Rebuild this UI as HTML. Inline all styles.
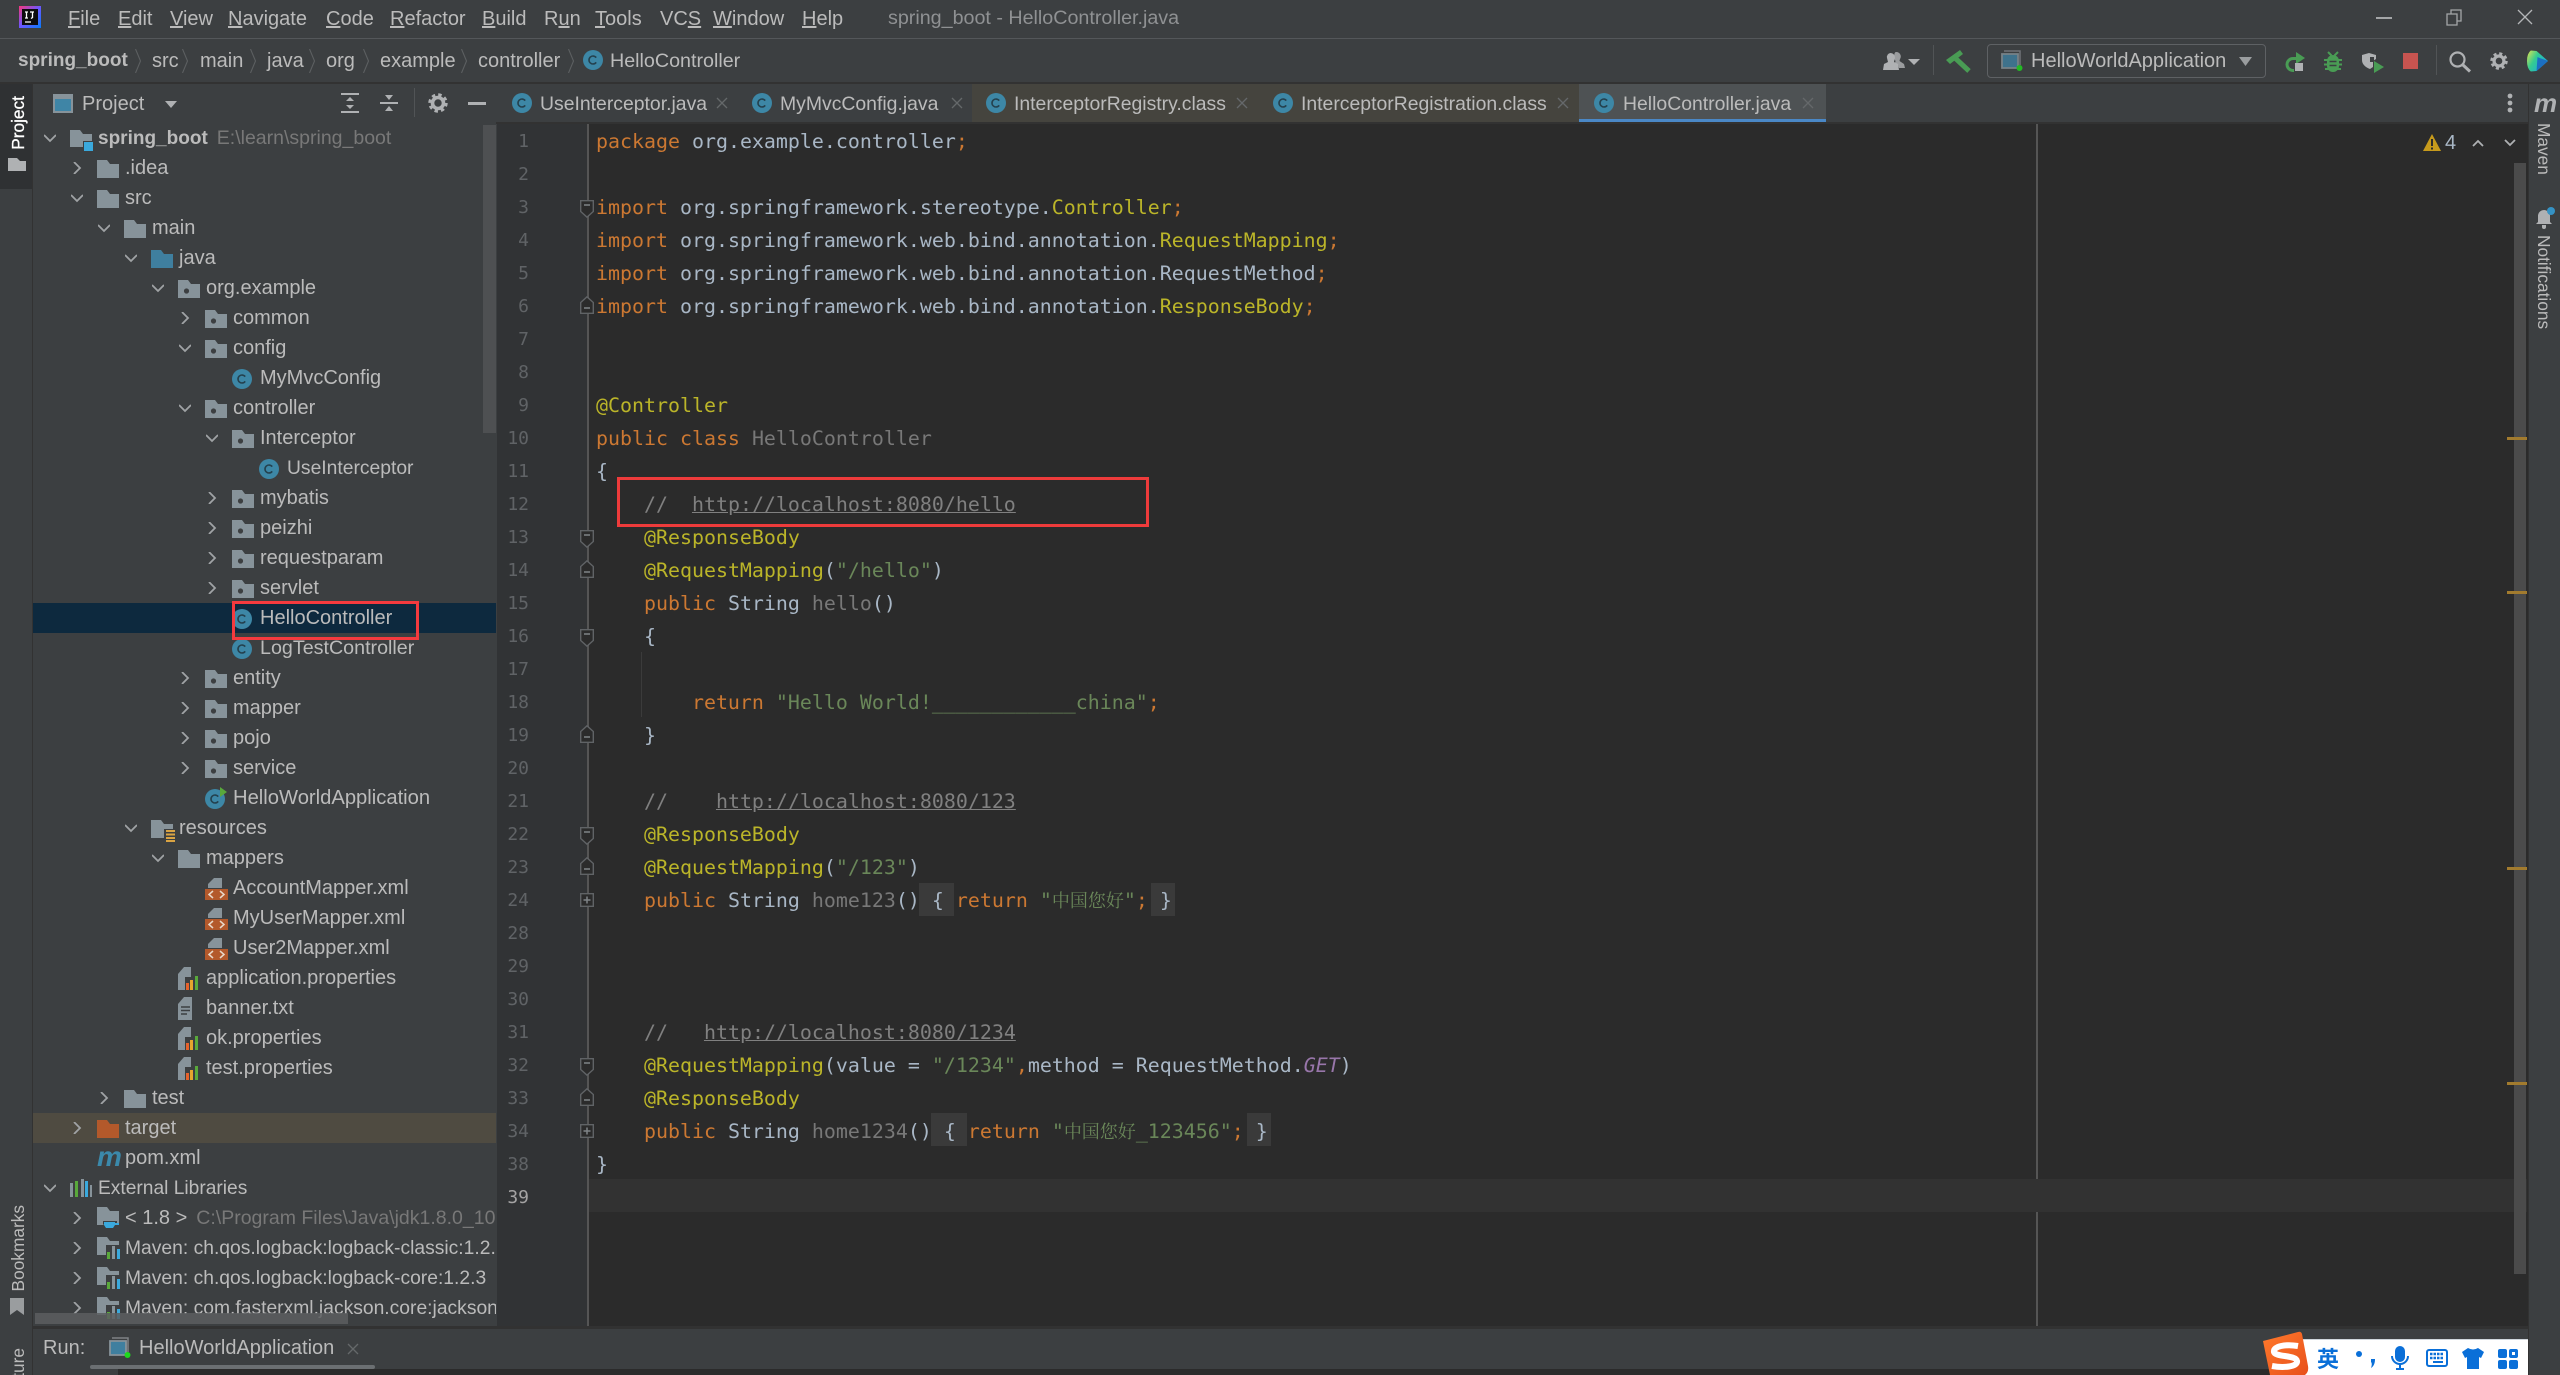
<!DOCTYPE html>
<html lang="en"><head><meta charset="utf-8"><title>spring_boot - HelloController.java</title>
<style>
html{margin:0;padding:0;width:2560px;height:1375px;overflow:hidden;background:#3c3f41}
body{margin:0;padding:0;width:2560px;height:1375px;position:relative;overflow:hidden;background:#3c3f41;font:20px "Liberation Sans","Noto Sans CJK SC",sans-serif;color:#bbb}
#root{position:absolute;left:0;top:0;width:2560px;height:1375px;overflow:hidden}
.t{position:absolute;white-space:nowrap}
.b{position:absolute}
svg{position:absolute;overflow:visible}
.m{top:1px;line-height:36px}
.n{top:41px;line-height:40px}
.tb{top:84px;line-height:40px;font-size:19.400px}
.v{position:absolute;writing-mode:vertical-rl;white-space:nowrap;font-size:17.300px;line-height:20px}
.up{transform:rotate(180deg)}
#tree{position:absolute;left:33px;top:123px;width:463px;height:1203px;overflow:hidden}
.r{position:relative;height:30px;line-height:31px;white-space:nowrap;padding-left:calc(65px + 27px*var(--l))}
.r>svg{left:calc(37px + 27px*var(--l));top:6px}
.r>svg.a{left:calc(11px + 27px*var(--l));top:9px;width:12px;height:12px}
.r>svg.e{top:7px}
.g{color:#787878}
.q{font-size:19.300px}
#code{position:absolute;left:596px;top:125px;font:19.93px "DejaVu Sans Mono","Liberation Mono","Noto Sans CJK SC",monospace;color:#a9b7c6}
#code div{height:33px;line-height:33px;white-space:pre}
#nums{position:absolute;left:497px;width:32px;top:125px;font:18px "DejaVu Sans Mono","Liberation Mono",monospace;color:#606366;text-align:right}
#nums div{height:33px;line-height:33px}
.k{color:#cc7832}.y{color:#bbb529}.s{color:#6a8759}.c{color:#808080}.u{color:#808080;text-decoration:underline}.w{color:#787878}.p{color:#9876aa;font-style:italic}
.z{font:18px "Noto Serif CJK SC","Noto Sans CJK SC",serif}
</style></head><body><div id="root">
<svg width="0" height="0" style="position:absolute"><defs>
<symbol id="c" viewBox="0 0 20 20"><circle cx="10" cy="10" r="10" fill="#3d87a6"/><path d="M13.2 7.6A4 4 0 1 0 13.2 12.4" fill="none" stroke="#24414e" stroke-width="1.6"/></symbol>
<symbol id="ca" viewBox="0 0 22 22"><circle cx="10" cy="12" r="10" fill="#3d87a6"/><path d="M13.2 9.6A4 4 0 1 0 13.2 14.4" fill="none" stroke="#24414e" stroke-width="1.6"/><path d="M15 0l7 5-7 5z" fill="#59a83b"/></symbol>
<symbol id="ar" viewBox="0 0 12 12"><path d="M3 0l6 6-6 6" fill="none" stroke="#a0a3a5" stroke-width="1.8"/></symbol>
<symbol id="ad" viewBox="0 0 12 12"><path d="M0 3l6 6 6-6" fill="none" stroke="#a0a3a5" stroke-width="1.8"/></symbol>
<symbol id="fo" viewBox="0 0 22 18"><path d="M0 0h10l3 4h9v14H0z" fill="#87939a"/></symbol>
<symbol id="fb" viewBox="0 0 22 18"><path d="M0 0h10l3 4h9v14H0z" fill="#3f7f9f"/></symbol>
<symbol id="fp" viewBox="0 0 22 18"><path d="M0 0h10l3 4h9v14H0z" fill="#87939a"/><circle cx="8.5" cy="11" r="2.6" fill="#3c3f41"/></symbol>
<symbol id="fm" viewBox="0 0 24 22"><path d="M0 0h10l3 4h9v13H0z" fill="#87939a"/><path d="M13 11h11v11H13z" fill="#3c3f41"/><path d="M14 12h9v9h-9z" fill="#3aa9dd"/></symbol>
<symbol id="fr" viewBox="0 0 24 22"><path d="M0 0h10l3 4h9v14H0z" fill="#87939a"/><path d="M13 9h11v13H13z" fill="#3c3f41"/><path d="M15 10h9v2h-9zm0 3.500h9v2h-9zm0 3.500h9v2h-9zm0 3h9v2h-9z" fill="#d9a343"/></symbol>
<symbol id="ft" viewBox="0 0 22 18"><path d="M0 0h10l3 4h9v14H0z" fill="#b3592b"/></symbol>
<symbol id="xm" viewBox="0 0 23 23"><path d="M3 11V7l6-6h8v10z" fill="#87939a"/><path d="M0 12h23v11H0z" fill="#b3592b"/><path d="M8 14l-4 3.500 4 3.500M15 14l4 3.500-4 3.500" fill="none" stroke="#e8d8c8" stroke-width="1.5"/></symbol>
<symbol id="pr" viewBox="0 0 20 23"><path d="M0 7l6-7h7v23H0z" fill="#87939a"/><path d="M7 10h13v13H7z" fill="#3c3f41"/><path d="M8 16h3v7H8z" fill="#e6612a"/><path d="M12 13h3v10h-3z" fill="#e6a52e"/><path d="M17 9h3v14h-3z" fill="#59a83b"/></symbol>
<symbol id="tx" viewBox="0 0 16 23"><path d="M0 7l6-7h8v23H0z" fill="#87939a"/><path d="M3 10h9M3 13.500h9M3 17h6" stroke="#3c3f41" stroke-width="1.400"/></symbol>
<symbol id="lb" viewBox="0 0 22 18"><path d="M0 4h3v14H0z" fill="#87939a"/><path d="M5 2h3v16H5z" fill="#59a83b"/><path d="M11 0h3v18h-3z" fill="#87939a"/><path d="M15 2h3v16h-3z" fill="#3aa9dd"/><path d="M20 6h2v12h-2z" fill="#87939a"/></symbol>
<symbol id="jd" viewBox="0 0 23 22"><path d="M0 0h10l3 4h9v14H0z" fill="#87939a"/><path d="M6 14h14v3l-2 4H9l-3-4z" fill="#3c3f41"/><path d="M7 15h11v3l-2 3H9l-2-3z" fill="#3aa9dd"/><path d="M18 16h4v2h-4z" fill="#3aa9dd"/></symbol>
<symbol id="mv" viewBox="0 0 23 22"><path d="M0 0h10l3 4h9v14H0z" fill="#87939a"/><path d="M9 8h14v14H9z" fill="#3c3f41"/><path d="M10 15h3v7h-3z" fill="#59a83b"/><path d="M15 9h3v13h-3z" fill="#87939a"/><path d="M20 12h3v10h-3z" fill="#3aa9dd"/></symbol>
<symbol id="ftop" viewBox="0 0 14 18"><path d="M.7.7h12.600v10.800L7 17.200.7 11.500z" fill="#2b2b2b" stroke="#606366" stroke-width="1.400"/><path d="M4 5h6" stroke="#808487" stroke-width="1.500"/></symbol>
<symbol id="fbot" viewBox="0 0 14 18"><path d="M.7 17.300h12.600V6.500L7 .8.700 6.500z" fill="#2b2b2b" stroke="#606366" stroke-width="1.400"/><path d="M4 12h6" stroke="#808487" stroke-width="1.500"/></symbol>
<symbol id="fplus" viewBox="0 0 14 14"><path d="M.7.7h12.600v12.600H.7z" fill="#2b2b2b" stroke="#606366" stroke-width="1.400"/><path d="M3.500 7h7M7 3.500v7" stroke="#808487" stroke-width="1.500"/></symbol>
<symbol id="x" viewBox="0 0 12 12"><path d="M1 1l10 10M11 1L1 11" stroke="#65686a" stroke-width="1.300" fill="none"/></symbol>
<symbol id="ch" viewBox="0 0 6 24"><path d="M.5 0L5.500 12 .5 24" stroke="#5c5f61" stroke-width="1.100" fill="none"/></symbol>
<symbol id="gear" viewBox="0 0 20 20"><circle cx="10" cy="10" r="5.500" fill="none" stroke="#afb1b3" stroke-width="3.600"/><circle cx="10" cy="10" r="8" fill="none" stroke="#afb1b3" stroke-width="3.400" stroke-dasharray="3.300 2.980"/></symbol>
<symbol id="run" viewBox="0 0 22 21"><path d="M3 1h16v14" fill="none" stroke="#7e8285" stroke-width="1.500"/><path d="M1 4h16v14H1z" fill="#3f7f9f" stroke="#87939a" stroke-width="1.800"/><circle cx="18.500" cy="18" r="3" fill="#1ed81e"/></symbol>
</defs></svg>

<!-- title bar -->
<div class="b" style="left:0;top:38px;width:2560px;height:1px;background:#54575a"></div>
<svg style="left:19px;top:6px" width="22" height="22" viewBox="0 0 22 22"><defs><linearGradient id="ij" x1="0" y1="0" x2="1" y2="1"><stop offset="0" stop-color="#f7377a"/><stop offset=".5" stop-color="#6b57ff"/><stop offset="1" stop-color="#087cfa"/></linearGradient></defs><rect width="22" height="22" fill="url(#ij)"/><rect x="3" y="3" width="16" height="16" fill="#0c0c0e"/><path d="M6 6h3M7.500 6v6M6 12h3M11 6h4M13.500 6v5.500L12 12.500M6 16h6" stroke="#fff" stroke-width="1.300" fill="none"/></svg>
<div class="t m" style="left:68px"><u>F</u>ile</div>
<div class="t m" style="left:118px"><u>E</u>dit</div>
<div class="t m" style="left:170px"><u>V</u>iew</div>
<div class="t m" style="left:228px"><u>N</u>avigate</div>
<div class="t m" style="left:326px"><u>C</u>ode</div>
<div class="t m" style="left:390px"><u>R</u>efactor</div>
<div class="t m" style="left:482px"><u>B</u>uild</div>
<div class="t m" style="left:544px">R<u>u</u>n</div>
<div class="t m" style="left:595px"><u>T</u>ools</div>
<div class="t m" style="left:660px">VC<u>S</u></div>
<div class="t m" style="left:713px"><u>W</u>indow</div>
<div class="t m" style="left:802px"><u>H</u>elp</div>
<div class="t m" style="left:888px;color:#8f9193;font-size:19.700px;top:0">spring_boot - HelloController.java</div>
<div class="b" style="left:2376px;top:17px;width:16px;height:2px;background:#a4a6a8"></div>
<svg style="left:2446px;top:9px" width="16" height="17" viewBox="0 0 16 17"><path d="M1 5h10v11H1zM5 5V1h10v11h-4" fill="none" stroke="#a4a6a8" stroke-width="1.300"/></svg>
<svg style="left:2517px;top:9px" width="16" height="16" viewBox="0 0 16 16"><path d="M1 1l14 14M15 1L1 15" stroke="#b4b6b8" stroke-width="1.300"/></svg>

<!-- nav bar -->
<div class="t n" style="left:18px;font-weight:bold;font-size:19px">spring_boot</div>
<svg style="left:135px;top:49px" width="6" height="24"><use href="#ch"/></svg>
<div class="t n" style="left:152px">src</div>
<svg style="left:182px;top:49px" width="6" height="24"><use href="#ch"/></svg>
<div class="t n" style="left:200px">main</div>
<svg style="left:250px;top:49px" width="6" height="24"><use href="#ch"/></svg>
<div class="t n" style="left:267px">java</div>
<svg style="left:309px;top:49px" width="6" height="24"><use href="#ch"/></svg>
<div class="t n" style="left:326px">org</div>
<svg style="left:363px;top:49px" width="6" height="24"><use href="#ch"/></svg>
<div class="t n" style="left:380px">example</div>
<svg style="left:461px;top:49px" width="6" height="24"><use href="#ch"/></svg>
<div class="t n" style="left:478px">controller</div>
<svg style="left:568px;top:49px" width="6" height="24"><use href="#ch"/></svg>
<svg style="left:583px;top:50px" width="20" height="20"><use href="#c"/></svg>
<div class="t n" style="left:610px;font-size:19.700px">HelloController</div>

<!-- toolbar right -->
<svg style="left:1883px;top:52px" width="22" height="18" viewBox="0 0 22 18"><path d="M13 0a4.500 4.500 0 0 1 4 7l-.5 2 4.500 3 1 4h-6l-1-3-3-2 .5-2-1.500-3c0-3 .5-6 2-6z" fill="#9a9c9e"/><path d="M7.500 1A4.500 4.500 0 0 1 12 6l-1 4 4 2 1 6H0l1-6 4-2-1-4a4 4 0 0 1 3.500-5z" fill="#afb1b3"/></svg>
<svg style="left:1908px;top:59px" width="12" height="6"><path d="M0 0h12L6 6z" fill="#afb1b3"/></svg>
<div class="b" style="left:1933px;top:45px;width:1px;height:30px;background:#515456"></div>
<svg style="left:1946px;top:50px" width="24" height="22" viewBox="0 0 24 22"><path d="M0 10L14 0l3 4L4 14z" fill="#499c54"/><path d="M8 7l15 14" stroke="#499c54" stroke-width="5"/></svg>
<div class="b" style="left:1987px;top:44px;width:277px;height:32px;border:1px solid #5e6164;border-radius:4px"></div>
<svg style="left:2001px;top:50px;opacity:.8" width="22" height="21"><use href="#run"/></svg>
<div class="t n" style="left:2031px">HelloWorldApplication</div>
<svg style="left:2239px;top:57px" width="13" height="9"><path d="M0 0h13L6.500 9z" fill="#9a9d9f"/></svg>
<svg style="left:2285px;top:52px" width="20" height="20" viewBox="0 0 20 20"><path d="M9 18.500H8A6 6 0 0 1 8 6.500h4" fill="none" stroke="#499c54" stroke-width="3"/><path d="M11 0l9 6-9 6z" fill="#499c54"/><path d="M10 11h8v8h-8z" fill="#afb1b3"/></svg>
<svg style="left:2324px;top:52px" width="18" height="20" viewBox="0 0 18 20"><path d="M4 0l3.500 3.500M14 0l-3.500 3.500M0 8h18M0 12.500h18M1 17h16" stroke="#499c54" stroke-width="2" fill="none"/><rect x="3" y="3" width="12" height="17" rx="6" fill="#499c54"/><path d="M5.500 9.500h7M5.500 13.500h7" stroke="#3c3f41" stroke-width="1.500"/></svg>
<svg style="left:2362px;top:53px" width="22" height="20" viewBox="0 0 22 20"><path d="M0 2l7-2 7 2v4l-3 2v6l-3 2C3 14 0 11 0 7z" fill="#afb1b3"/><path d="M8 4h4v5H8z" fill="#3c3f41"/><path d="M12 8l10 6-10 6z" fill="#499c54"/></svg>
<div class="b" style="left:2403px;top:53px;width:15px;height:16px;background:#c75450"></div>
<div class="b" style="left:2436px;top:45px;width:1px;height:30px;background:#515456"></div>
<svg style="left:2449px;top:51px" width="22" height="21" viewBox="0 0 22 21"><circle cx="8.500" cy="8.500" r="7" fill="none" stroke="#afb1b3" stroke-width="2.200"/><path d="M13.500 13.500L21 20.500" stroke="#afb1b3" stroke-width="3"/></svg>
<svg style="left:2490px;top:52px" width="18" height="18"><use href="#gear"/></svg>
<svg style="left:2527px;top:50px" width="21" height="22" viewBox="0 0 22 22"><defs><linearGradient id="tbx" x1="0" y1="0" x2="1" y2=".6"><stop offset="0" stop-color="#e4e34f"/><stop offset=".45" stop-color="#35cc90"/><stop offset="1" stop-color="#17a8e0"/></linearGradient></defs><path d="M4 0Q0 3 0 11T4 22l6-.500L22 11 10 .5z" fill="url(#tbx)"/><path d="M11 7l11 4-12 10.500z" fill="#1c6fc2"/></svg>

<!-- left strip -->
<div class="b" style="left:0;top:82px;width:2560px;height:2px;background:#323232"></div>
<div class="b" style="left:32px;top:83px;width:1px;height:1292px;background:#323232"></div>
<div class="b" style="left:0;top:84px;width:32px;height:105px;background:#2f3133"></div>
<div class="v up" style="left:8px;top:96px;color:#fff;-webkit-text-stroke:.3px #fff">Project</div>
<svg style="left:8px;top:158px" width="18" height="13" viewBox="0 0 18 13"><path d="M0 0h9l3 3h6v10H0z" fill="#afb1b3"/></svg>
<div class="v up" style="left:8px;top:1205px">Bookmarks</div>
<svg style="left:10px;top:1298px" width="14" height="17" viewBox="0 0 14 17"><path d="M0 0h14v17l-7-5-7 5z" fill="#9a9d9f"/></svg>
<div class="v up" style="left:8px;top:1348px">Structure</div>

<!-- project header -->
<svg style="left:53px;top:94px" width="20" height="19" viewBox="0 0 20 19"><path d="M0 0h20v19H0z" fill="#87939a"/><path d="M2 5h16v12H2z" fill="#3f85a6"/></svg>
<div class="t tb" style="left:82px;font-size:20px">Project</div>
<svg style="left:165px;top:101px" width="12" height="7"><path d="M0 0h12L6 7z" fill="#afb1b3"/></svg>
<svg style="left:341px;top:93px" width="18" height="20" viewBox="0 0 18 20"><path d="M0 1h18M0 19h18" stroke="#afb1b3" stroke-width="2"/><path d="M5 8l4-4 4 4zM5 12l4 4 4-4z" fill="#afb1b3"/></svg>
<svg style="left:380px;top:93px" width="18" height="20" viewBox="0 0 18 20"><path d="M0 10h18" stroke="#afb1b3" stroke-width="2"/><path d="M5 2l4 5 4-5zM5 18l4-5 4 5z" fill="#afb1b3"/></svg>
<div class="b" style="left:414px;top:88px;width:1px;height:29px;background:#515456"></div>
<svg style="left:428px;top:93px" width="20" height="20"><use href="#gear"/></svg>
<div class="b" style="left:468px;top:102px;width:18px;height:2.500px;background:#afb1b3"></div>

<!-- tree -->
<div id="tree">
<div class="r" style="--l:0"><svg class="a"><use href="#ad"/></svg><svg width="24" height="22" style="top:7px"><use href="#fm"/></svg><b style="font-size:19px">spring_boot</b><span class="g" style="margin-left:9px;font-size:19.500px">E:\learn\spring_boot</span></div>
<div class="r" style="--l:1"><svg class="a"><use href="#ar"/></svg><svg class="e" width="22" height="18"><use href="#fo"/></svg>.idea</div>
<div class="r" style="--l:1"><svg class="a"><use href="#ad"/></svg><svg class="e" width="22" height="18"><use href="#fo"/></svg>src</div>
<div class="r" style="--l:2"><svg class="a"><use href="#ad"/></svg><svg class="e" width="22" height="18"><use href="#fo"/></svg>main</div>
<div class="r" style="--l:3"><svg class="a"><use href="#ad"/></svg><svg class="e" width="22" height="18"><use href="#fb"/></svg>java</div>
<div class="r" style="--l:4"><svg class="a"><use href="#ad"/></svg><svg class="e" width="22" height="18"><use href="#fp"/></svg>org.example</div>
<div class="r" style="--l:5"><svg class="a"><use href="#ar"/></svg><svg class="e" width="22" height="18"><use href="#fp"/></svg>common</div>
<div class="r" style="--l:5"><svg class="a"><use href="#ad"/></svg><svg class="e" width="22" height="18"><use href="#fp"/></svg>config</div>
<div class="r" style="--l:6"><svg width="20" height="20"><use href="#c"/></svg>MyMvcConfig</div>
<div class="r" style="--l:5"><svg class="a"><use href="#ad"/></svg><svg class="e" width="22" height="18"><use href="#fp"/></svg>controller</div>
<div class="r" style="--l:6"><svg class="a"><use href="#ad"/></svg><svg class="e" width="22" height="18"><use href="#fp"/></svg>Interceptor</div>
<div class="r" style="--l:7"><svg width="20" height="20"><use href="#c"/></svg><span class="q">UseInterceptor</span></div>
<div class="r" style="--l:6"><svg class="a"><use href="#ar"/></svg><svg class="e" width="22" height="18"><use href="#fp"/></svg>mybatis</div>
<div class="r" style="--l:6"><svg class="a"><use href="#ar"/></svg><svg class="e" width="22" height="18"><use href="#fp"/></svg>peizhi</div>
<div class="r" style="--l:6"><svg class="a"><use href="#ar"/></svg><svg class="e" width="22" height="18"><use href="#fp"/></svg>requestparam</div>
<div class="r" style="--l:6"><svg class="a"><use href="#ar"/></svg><svg class="e" width="22" height="18"><use href="#fp"/></svg>servlet</div>
<div class="r" style="--l:6;background:#0d293e"><svg width="20" height="20"><use href="#c"/></svg>HelloController</div>
<div class="r" style="--l:6"><svg width="20" height="20"><use href="#c"/></svg><span class="q" style="font-size:19.700px">LogTestController</span></div>
<div class="r" style="--l:5"><svg class="a"><use href="#ar"/></svg><svg class="e" width="22" height="18"><use href="#fp"/></svg>entity</div>
<div class="r" style="--l:5"><svg class="a"><use href="#ar"/></svg><svg class="e" width="22" height="18"><use href="#fp"/></svg>mapper</div>
<div class="r" style="--l:5"><svg class="a"><use href="#ar"/></svg><svg class="e" width="22" height="18"><use href="#fp"/></svg>pojo</div>
<div class="r" style="--l:5"><svg class="a"><use href="#ar"/></svg><svg class="e" width="22" height="18"><use href="#fp"/></svg>service</div>
<div class="r" style="--l:5"><svg width="22" height="22" style="top:4px"><use href="#ca"/></svg><span style="font-size:20.200px">HelloWorldApplication</span></div>
<div class="r" style="--l:3"><svg class="a"><use href="#ad"/></svg><svg class="e" width="24" height="22"><use href="#fr"/></svg>resources</div>
<div class="r" style="--l:4"><svg class="a"><use href="#ad"/></svg><svg class="e" width="22" height="18"><use href="#fo"/></svg>mappers</div>
<div class="r" style="--l:5"><svg width="23" height="23" style="top:4px"><use href="#xm"/></svg>AccountMapper.xml</div>
<div class="r" style="--l:5"><svg width="23" height="23" style="top:4px"><use href="#xm"/></svg>MyUserMapper.xml</div>
<div class="r" style="--l:5"><svg width="23" height="23" style="top:4px"><use href="#xm"/></svg>User2Mapper.xml</div>
<div class="r" style="--l:4"><svg width="20" height="23" style="top:4px"><use href="#pr"/></svg>application.properties</div>
<div class="r" style="--l:4"><svg width="16" height="23" style="top:4px"><use href="#tx"/></svg>banner.txt</div>
<div class="r" style="--l:4"><svg width="20" height="23" style="top:4px"><use href="#pr"/></svg>ok.properties</div>
<div class="r" style="--l:4"><svg width="20" height="23" style="top:4px"><use href="#pr"/></svg>test.properties</div>
<div class="r" style="--l:2"><svg class="a"><use href="#ar"/></svg><svg class="e" width="22" height="18"><use href="#fo"/></svg>test</div>
<div class="r" style="--l:1;background:#4f4b41"><svg class="a"><use href="#ar"/></svg><svg class="e" width="22" height="18"><use href="#ft"/></svg>target</div>
<div class="r" style="--l:1"><span class="t" style="left:64px;top:1px;font:italic bold 28px/26px 'Liberation Sans',sans-serif;color:#3b89ab">m</span>pom.xml</div>
<div class="r" style="--l:0"><svg class="a"><use href="#ad"/></svg><svg width="22" height="18" style="top:6px"><use href="#lb"/></svg><span style="font-size:19.200px">External Libraries</span></div>
<div class="r" style="--l:1"><svg class="a"><use href="#ar"/></svg><svg width="23" height="22" style="top:4px"><use href="#jd"/></svg>&lt; 1.8 &gt;<span class="g" style="margin-left:9px;font-size:19.500px">C:\Program Files\Java\jdk1.8.0_101</span></div>
<div class="r q" style="--l:1"><svg class="a"><use href="#ar"/></svg><svg width="23" height="22" style="top:4px"><use href="#mv"/></svg>Maven: ch.qos.logback:logback-classic:1.2.3</div>
<div class="r q" style="--l:1"><svg class="a"><use href="#ar"/></svg><svg width="23" height="22" style="top:4px"><use href="#mv"/></svg>Maven: ch.qos.logback:logback-core:1.2.3</div>
<div class="r q" style="--l:1"><svg class="a"><use href="#ar"/></svg><svg width="23" height="22" style="top:4px"><use href="#mv"/></svg>Maven: com.fasterxml.jackson.core:jackson-databind</div>
</div>
<div class="b" style="left:483px;top:125px;width:13px;height:308px;background:#4e5052"></div>
<div class="b" style="left:35px;top:1313px;width:313px;height:11px;background:rgba(92,94,96,.85)"></div>
<div class="b" style="left:232px;top:601px;width:181px;height:33px;border:3px solid #f43a3e"></div>

<!-- tab bar -->
<div class="b" style="left:972px;top:84px;width:607px;height:38px;background:#45443e"></div>
<div class="b" style="left:1579px;top:84px;width:247px;height:36px;background:#4e5254"></div>
<div class="b" style="left:1579px;top:119px;width:247px;height:5px;background:#4a88c7"></div>
<svg style="left:512px;top:93px" width="20" height="20"><use href="#c"/></svg>
<div class="t tb" style="left:540px">UseInterceptor.java</div>
<svg style="left:716px;top:97px" width="12" height="12"><use href="#x"/></svg>
<svg style="left:752px;top:93px" width="20" height="20"><use href="#c"/></svg>
<div class="t tb" style="left:780px">MyMvcConfig.java</div>
<svg style="left:951px;top:97px" width="12" height="12"><use href="#x"/></svg>
<svg style="left:986px;top:93px" width="20" height="20"><use href="#c"/></svg>
<div class="t tb" style="left:1014px">InterceptorRegistry.class</div>
<svg style="left:1236px;top:97px" width="12" height="12"><use href="#x"/></svg>
<svg style="left:1273px;top:93px" width="20" height="20"><use href="#c"/></svg>
<div class="t tb" style="left:1301px">InterceptorRegistration.class</div>
<svg style="left:1557px;top:97px" width="12" height="12"><use href="#x"/></svg>
<svg style="left:1594px;top:93px" width="20" height="20"><use href="#c"/></svg>
<div class="t tb" style="left:1623px">HelloController.java</div>
<svg style="left:1802px;top:97px" width="12" height="12"><use href="#x"/></svg>
<svg style="left:2507px;top:93px" width="6" height="20"><circle cx="3" cy="3" r="2.400" fill="#afb1b3"/><circle cx="3" cy="10" r="2.400" fill="#afb1b3"/><circle cx="3" cy="17" r="2.400" fill="#afb1b3"/></svg>

<!-- editor -->
<div class="b" style="left:496px;top:122px;width:2032px;height:2px;background:#323232"></div>
<div class="b" style="left:497px;top:124px;width:90px;height:1202px;background:#313335"></div>
<div class="b" style="left:587px;top:124px;width:1941px;height:1202px;background:#2b2b2b"></div>
<div class="b" style="left:587px;top:124px;width:1.500px;height:1202px;background:#555"></div>
<div class="b" style="left:2036px;top:124px;width:1.500px;height:1202px;background:#555"></div>
<div class="b" style="left:589px;top:1179px;width:1938px;height:33px;background:#323232"></div>
<div class="b" style="left:641px;top:652px;width:1px;height:65px;background:#3b3b3b"></div>
<div class="b" style="left:919px;top:883px;width:35px;height:33px;background:#3a3a3a"></div>
<div class="b" style="left:1151px;top:883px;width:24px;height:33px;background:#3a3a3a"></div>
<div class="b" style="left:931px;top:1113px;width:36px;height:33px;background:#3a3a3a"></div>
<div class="b" style="left:1247px;top:1113px;width:24px;height:33px;background:#3a3a3a"></div>

<div id="nums">
<div>1</div><div>2</div><div>3</div><div>4</div><div>5</div><div>6</div><div>7</div><div>8</div><div>9</div><div>10</div><div>11</div><div>12</div><div>13</div><div>14</div><div>15</div><div>16</div><div>17</div><div>18</div><div>19</div><div>20</div><div>21</div><div>22</div><div>23</div><div>24</div><div>28</div><div>29</div><div>30</div><div>31</div><div>32</div><div>33</div><div>34</div><div>38</div><div style="color:#a4a3a3">39</div>
</div>

<div id="code">
<div><span class="k">package</span> org.example.controller<span class="k">;</span></div>
<div></div>
<div><span class="k">import</span> org.springframework.stereotype.<span class="y">Controller</span><span class="k">;</span></div>
<div><span class="k">import</span> org.springframework.web.bind.annotation.<span class="y">RequestMapping</span><span class="k">;</span></div>
<div><span class="k">import</span> org.springframework.web.bind.annotation.RequestMethod<span class="k">;</span></div>
<div><span class="k">import</span> org.springframework.web.bind.annotation.<span class="y">ResponseBody</span><span class="k">;</span></div>
<div></div>
<div></div>
<div><span class="y">@Controller</span></div>
<div><span class="k">public class</span> <span class="w">HelloController</span></div>
<div>{</div>
<div>    <span class="c">//  </span><span class="u">http://localhost:8080/hello</span></div>
<div>    <span class="y">@ResponseBody</span></div>
<div>    <span class="y">@RequestMapping</span>(<span class="s">"/hello"</span>)</div>
<div>    <span class="k">public</span> String <span class="w">hello</span>()</div>
<div>    {</div>
<div></div>
<div>        <span class="k">return</span> <span class="s">"Hello World!____________china"</span><span class="k">;</span></div>
<div>    }</div>
<div></div>
<div>    <span class="c">//    </span><span class="u">http://localhost:8080/123</span></div>
<div>    <span class="y">@ResponseBody</span></div>
<div>    <span class="y">@RequestMapping</span>(<span class="s">"/123"</span>)</div>
<div>    <span class="k">public</span> String <span class="w">home123</span>() { <span class="k">return</span> <span class="s">"<span class="z">中国您好</span>"</span><span class="k">;</span> }</div>
<div></div>
<div></div>
<div></div>
<div>    <span class="c">//   </span><span class="u">http://localhost:8080/1234</span></div>
<div>    <span class="y">@RequestMapping</span>(value = <span class="s">"/1234"</span><span class="k">,</span>method = RequestMethod.<span class="p">GET</span>)</div>
<div>    <span class="y">@ResponseBody</span></div>
<div>    <span class="k">public</span> String <span class="w">home1234</span>() { <span class="k">return</span> <span class="s">"<span class="z">中国您好</span>_123456"</span><span class="k">;</span> }</div>
<div>}</div>
</div>

<svg style="left:580px;top:200px" width="14" height="18"><use href="#ftop"/></svg>
<svg style="left:580px;top:296px" width="14" height="18"><use href="#fbot"/></svg>
<svg style="left:580px;top:530px" width="14" height="18"><use href="#ftop"/></svg>
<svg style="left:580px;top:560px" width="14" height="18"><use href="#fbot"/></svg>
<svg style="left:580px;top:629px" width="14" height="18"><use href="#ftop"/></svg>
<svg style="left:580px;top:725px" width="14" height="18"><use href="#fbot"/></svg>
<svg style="left:580px;top:827px" width="14" height="18"><use href="#ftop"/></svg>
<svg style="left:580px;top:857px" width="14" height="18"><use href="#fbot"/></svg>
<svg style="left:580px;top:893px" width="14" height="14"><use href="#fplus"/></svg>
<svg style="left:580px;top:1058px" width="14" height="18"><use href="#ftop"/></svg>
<svg style="left:580px;top:1088px" width="14" height="18"><use href="#fbot"/></svg>
<svg style="left:580px;top:1124px" width="14" height="14"><use href="#fplus"/></svg>

<div class="b" style="left:617px;top:477px;width:526px;height:44px;border:3px solid #ee3b3b"></div>

<!-- inspection widget + scrollbar -->
<svg style="left:2423px;top:134px" width="18" height="17" viewBox="0 0 18 17"><path d="M9 0l9 17H0z" fill="#c69a1c"/><path d="M9 5v7M9 13.500v2" stroke="#2b2b2b" stroke-width="2"/></svg>
<div class="t" style="left:2445px;top:130px;line-height:26px;color:#a9b7c6">4</div>
<svg style="left:2472px;top:139px" width="12" height="8"><path d="M1 7l5-5 5 5" fill="none" stroke="#afb1b3" stroke-width="1.800"/></svg>
<svg style="left:2504px;top:139px" width="12" height="8"><path d="M1 1l5 5 5-5" fill="none" stroke="#afb1b3" stroke-width="1.800"/></svg>
<div class="b" style="left:2514px;top:163px;width:12px;height:1111px;background:#4b4b4b"></div>
<div class="b" style="left:2507px;top:437px;width:20px;height:3px;background:#a27b2e"></div>
<div class="b" style="left:2507px;top:591px;width:20px;height:3px;background:#a27b2e"></div>
<div class="b" style="left:2507px;top:867px;width:20px;height:3px;background:#a27b2e"></div>
<div class="b" style="left:2507px;top:1082px;width:20px;height:3px;background:#a27b2e"></div>

<!-- right strip -->
<div class="b" style="left:2528px;top:84px;width:1px;height:1291px;background:#323232"></div>
<div class="t" style="left:2534px;top:90px;font:italic bold 26px/26px 'Liberation Sans',sans-serif;color:#afb1b3">m</div>
<div class="v" style="left:2534px;top:123px">Maven</div>
<svg style="left:2536px;top:207px" width="20" height="22" viewBox="0 0 20 22"><path d="M8 3a6 6 0 0 1 6 6v6l2 2H0l2-2V9a6 6 0 0 1 6-6zM6 18h4v2a2 2 0 0 1-4 0z" fill="#afb1b3"/><circle cx="15" cy="4" r="4" fill="#3592c4"/></svg>
<div class="v" style="left:2534px;top:235px">Notifications</div>

<!-- bottom run bar -->
<div class="b" style="left:33px;top:1326px;width:2495px;height:3px;background:#323232"></div>
<div class="t" style="left:43px;top:1333px;line-height:30px">Run:</div>
<svg style="left:109px;top:1337px" width="22" height="21"><use href="#run"/></svg>
<div class="t" style="left:139px;top:1333px;line-height:30px">HelloWorldApplication</div>
<svg style="left:347px;top:1343px" width="12" height="12"><use href="#x"/></svg>
<div class="b" style="left:90px;top:1365px;width:285px;height:4px;border-radius:2px;background:#6b6f72"></div>
<div class="b" style="left:118px;top:1369px;width:2410px;height:6px;background:#2b2b2b"></div>

<!-- IME bar -->
<div class="b" style="left:2300px;top:1339px;width:228px;height:36px;background:#fff;border-top:1px solid #cfd6dc;box-sizing:border-box"></div>
<svg style="left:2260px;top:1332px" width="50" height="43" viewBox="0 0 50 43"><defs><linearGradient id="so" x1="0" y1="0" x2="1" y2="1"><stop offset="0" stop-color="#ff7a2c"/><stop offset="1" stop-color="#e8501b"/></linearGradient></defs><path d="M3 9L38 0q3-1 4 2l6 32q1 6-3 9H10z" fill="url(#so)"/><path d="M38 14C26 12 13 14 14 20c1 5 22 3 23 9 1 6-14 7-25 5" fill="none" stroke="#fff" stroke-width="6"/></svg>
<div class="t" style="left:2317px;top:1344px;font:bold 22px/28px 'Noto Sans CJK SC',sans-serif;color:#0a6fd8">英</div>
<svg style="left:2356px;top:1350px" width="20" height="18" viewBox="0 0 20 18"><circle cx="3" cy="4" r="3" fill="#0a6fd8"/><path d="M15 9h4c0 4-1 7-4 9 1-3 1-5 0-6z" fill="#0a6fd8"/></svg>
<svg style="left:2391px;top:1346px" width="18" height="24" viewBox="0 0 18 24"><rect x="4" y="0" width="10" height="16" rx="5" fill="#0a6fd8"/><path d="M1 10a8 8 0 0 0 16 0M9 18v4M5 23h8" fill="none" stroke="#0a6fd8" stroke-width="2"/></svg>
<svg style="left:2426px;top:1349px" width="22" height="18" viewBox="0 0 22 18"><rect x="1" y="1" width="20" height="16" rx="2" fill="none" stroke="#0a6fd8" stroke-width="2"/><path d="M4 5h14M4 9h14" stroke="#0a6fd8" stroke-width="2.500" stroke-dasharray="2.500 1"/><path d="M7 13h10" stroke="#0a6fd8" stroke-width="2"/></svg>
<svg style="left:2462px;top:1348px" width="22" height="21" viewBox="0 0 22 21"><path d="M6 0q5 3 10 0l6 4-3 6-2-1v12H5V9l-2 1-3-6z" fill="#0a6fd8"/></svg>
<svg style="left:2498px;top:1349px" width="20" height="20" viewBox="0 0 20 20"><rect width="9" height="9" rx="2" fill="#0a6fd8"/><rect x="11" width="9" height="9" rx="2" fill="#0a6fd8"/><rect x="14" y="3" width="3" height="3" fill="#fff"/><rect y="11" width="9" height="9" rx="2" fill="#0a6fd8"/><rect x="11" y="11" width="9" height="9" rx="2" fill="#0a6fd8"/></svg>
</div></body></html>
